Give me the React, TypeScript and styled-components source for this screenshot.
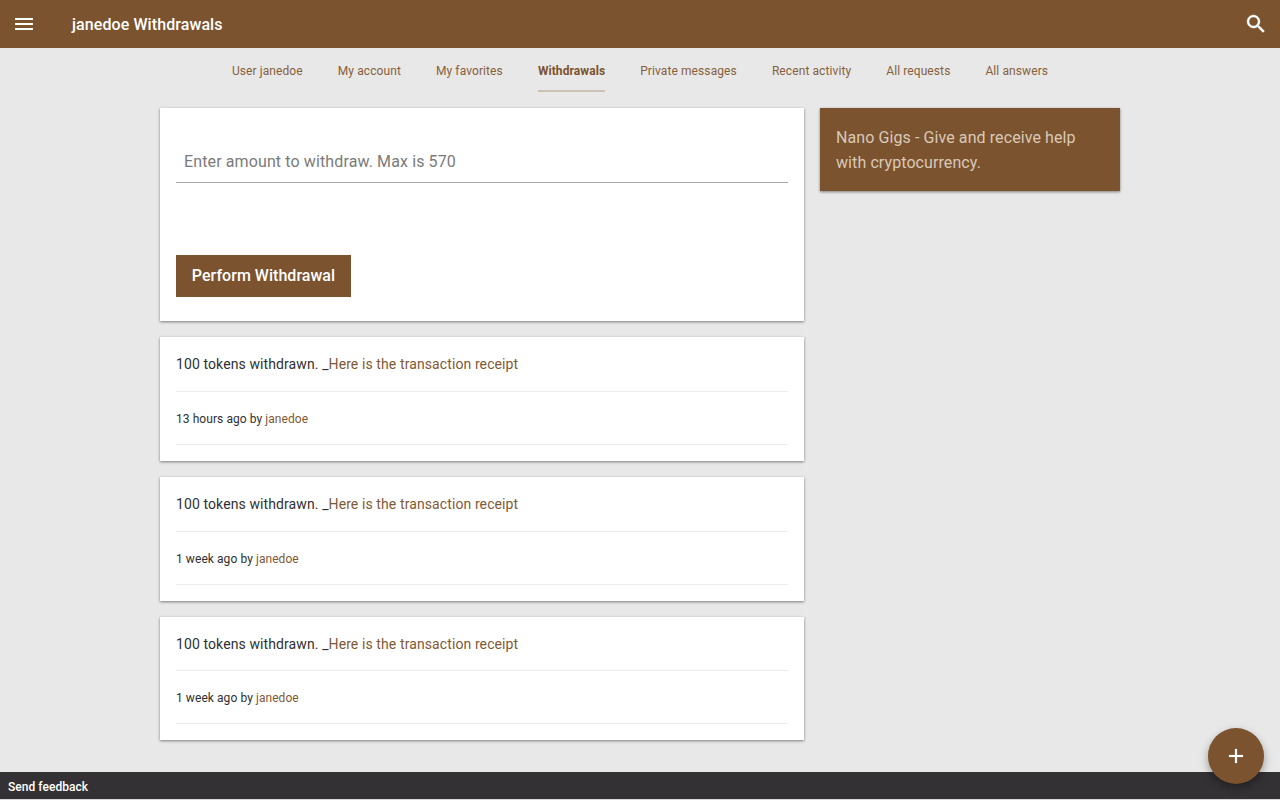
import React from 'react';
import styled, { createGlobalStyle } from 'styled-components';

const Global = createGlobalStyle`
  *, *::before, *::after { box-sizing: border-box; }
  body { margin: 0; background: #e8e8e8; color: #303030; font-family: Roboto, sans-serif; font-size: 14px; }
`;
const Page = styled.div`
  height: 800px;
  overflow: hidden;
  display: flex;
  flex-direction: column;
  position: relative;
`;
const Header = styled.header`
  height: 48px;
  flex: none;
  display: flex;
  align-items: center;
  padding: 0 12px;
  background: #7b532e;
  color: #fff;
`;
const IconButton = styled.button`
  width: 24px;
  height: 24px;
  padding: 0;
  border: 0;
  background: none;
  color: inherit;
  svg { display: block; fill: currentColor; }
`;
const Title = styled.h1`
  flex: 1;
  margin: 0 0 0 36px;
  padding-top: 2px;
  font-size: 16px;
  font-weight: 500;
  line-height: 24px;
  letter-spacing: 0.085px;
`;
const Nav = styled.nav`
  display: flex;
  justify-content: center;
  gap: 35px;
  height: 60px;
  flex: none;
`;
const NavLink = styled.a<{ $active?: boolean }>`
  height: 44px;
  line-height: 46px;
  font-size: 12px;
  letter-spacing: ${p => (p.$active ? 0.08 : 0.095)}px;
  color: ${p => (p.$active ? '#7b532e' : '#87603c')};
  font-weight: ${p => (p.$active ? 700 : 400)};
  border-bottom: 2px solid ${p => (p.$active ? '#cdc1b4' : 'transparent')};
`;
const Columns = styled.main`
  display: grid;
  grid-template-columns: 644px 300px;
  gap: 16px;
  width: 960px;
  margin: 0 auto;
  flex: 1;
  align-items: start;
`;
const Feed = styled.div`
  display: flex;
  flex-direction: column;
  gap: 16px;
`;
const Card = styled.section`
  background: #fff;
  box-shadow: 0 1px 3px rgba(0,0,0,.3), 0 1px 2px rgba(0,0,0,.2);
  padding: 0 16px;
`;
const FormCard = styled(Card)`
  height: 213.2px;
  padding-top: 32px;
`;
const Amount = styled.input`
  display: block;
  width: 100%;
  height: 43px;
  padding: 0 8px;
  border: 0;
  border-bottom: 1px solid #a8a8a8;
  font: 16px Roboto, sans-serif;
  letter-spacing: 0.12px;
  &::placeholder { color: #7b7b7b; opacity: 1; }
`;
const Submit = styled.button`
  display: block;
  margin-top: 72px;
  width: 175px;
  height: 42px;
  padding: 0 0 2px;
  border: 0;
  background: #7b532e;
  color: #fff;
  font: 500 16px Roboto, sans-serif;
  letter-spacing: 0.03px;
`;
const Entry = styled(Card)`
  height: 123.7px;
`;
const Line = styled.div<{ $small?: boolean }>`
  height: ${p => (p.$small ? 53 : 54.8)}px;
  line-height: 55px;
  font-size: ${p => (p.$small ? 12 : 14)}px;
  letter-spacing: ${p => (p.$small ? 0.07 : 0.1)}px;
  border-bottom: 1px solid #ebebeb;
`;
const Link = styled.a`
  color: #7f5935;
`;
const Promo = styled.aside`
  background: #7b532e;
  color: #d9c9b9;
  padding: 17px 16px 15px;
  height: 83px;
  font-size: 16px;
  line-height: 25px;
  letter-spacing: 0.09px;
  box-shadow: 0 1px 3px rgba(0,0,0,.3), 0 1px 2px rgba(0,0,0,.2);
`;
const Footer = styled.footer`
  height: 28px;
  flex: none;
  background: #343134;
  border-bottom: 1px solid #d6d6d6;
  color: #fff;
  padding-left: 8px;
  font-size: 12px;
  font-weight: 500;
  line-height: 30px;
  letter-spacing: 0.04px;
`;
const Fab = styled.button`
  position: absolute;
  right: 16px;
  bottom: 16px;
  width: 56px;
  height: 56px;
  padding: 16px;
  border: 0;
  border-radius: 50%;
  background: #7b532e;
  color: #fff;
  box-shadow: 0 4px 8px rgba(0,0,0,.35);
  svg { display: block; fill: currentColor; }
`;
const Icon = ({ d, weight = 0 }: { d: string; weight?: number }) => (
  <svg width="24" height="24" viewBox="0 0 24 24"><path d={d} stroke="currentColor" strokeWidth={weight} /></svg>
);

const links = ['User janedoe', 'My account', 'My favorites', 'Withdrawals', 'Private messages', 'Recent activity', 'All requests', 'All answers'];
const entries = ['13 hours ago', '1 week ago', '1 week ago'];

export default function App() {
  return (
    <Page>
      <Global />
      <Header>
        <IconButton aria-label="Menu"><Icon d="M3 18h18v-2H3v2zm0-5h18v-2H3v2zm0-7v2h18V6H3z" /></IconButton>
        <Title>janedoe Withdrawals</Title>
        <IconButton aria-label="Search"><Icon d="M15.5 14h-.79l-.28-.27A6.471 6.471 0 0 0 16 9.5 6.5 6.5 0 1 0 9.5 16c1.61 0 3.09-.59 4.23-1.57l.27.28v.79l5 4.99L20.49 19l-4.99-5zm-6 0C7.01 14 5 11.99 5 9.5S7.01 5 9.5 5 14 7.01 14 9.5 11.99 14 9.5 14z" weight={0.4} /></IconButton>
      </Header>
      <Nav>{links.map(l => <NavLink key={l} $active={l === 'Withdrawals'}>{l}</NavLink>)}</Nav>
      <Columns>
        <Feed>
          <FormCard>
            <Amount placeholder="Enter amount to withdraw. Max is 570" />
            <Submit>Perform Withdrawal</Submit>
          </FormCard>
          {entries.map((when, i) => (
            <Entry key={i}>
              <Line>100 tokens withdrawn. _<Link>Here is the transaction receipt</Link></Line>
              <Line $small>{when} by <Link>janedoe</Link></Line>
            </Entry>
          ))}
        </Feed>
        <Promo>Nano Gigs - Give and receive help with cryptocurrency.</Promo>
      </Columns>
      <Footer>Send feedback</Footer>
      <Fab aria-label="Add"><Icon d="M19 13h-6v6h-2v-6H5v-2h6V5h2v6h6v2z" weight={0.2} /></Fab>
    </Page>
  );
}
